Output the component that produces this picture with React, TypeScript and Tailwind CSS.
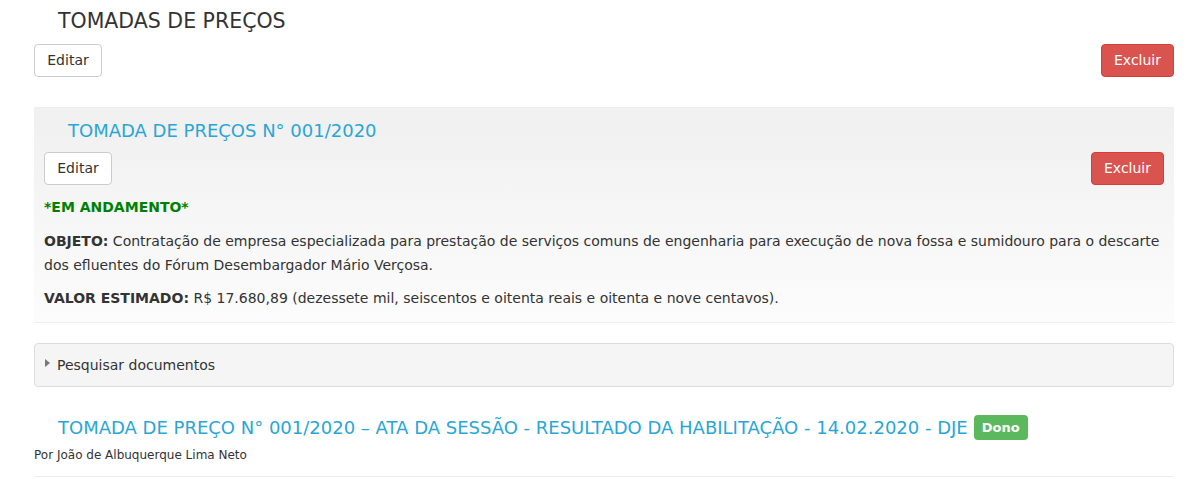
import React from "react";

const font = { fontFamily: '"DejaVu Sans", "Open Sans", sans-serif' };

const App: React.FC = () => {
  return (
    <div className="min-h-screen bg-white text-[#333] text-[14px]" style={font}>
      <div className="mx-[34px] w-[1140px]">
        <h1 className="pl-6 pt-[7px] text-[20.5px] leading-[28px] text-[#333]">TOMADAS DE PREÇOS</h1>
        <div className="mt-[9px] flex justify-between">
          <button className="h-[33px] w-[68px] rounded border border-[#ccc] bg-white text-[14px] text-[#333]">Editar</button>
          <button className="h-[33px] w-[73px] rounded border border-[#d43f3a] bg-[#d9534f] text-[14px] text-white">Excluir</button>
        </div>

        <div className="mt-[30px] border-t border-[#eee] border-b bg-gradient-to-b from-[#f0f0f0] to-[#fcfcfc] px-[10px] pb-[12px]">
          <h2 className="pl-6 pt-[11px] text-[18px] leading-[24px] text-[#2aa6d6]">TOMADA DE PREÇOS N° 001/2020</h2>
          <div className="mt-[9px] flex justify-between">
            <button className="h-[33px] w-[68px] rounded border border-[#ccc] bg-white text-[14px] text-[#333]">Editar</button>
            <button className="h-[33px] w-[73px] rounded border border-[#d43f3a] bg-[#d9534f] text-[14px] text-white">Excluir</button>
          </div>
          <p className="mt-[12px] font-bold text-[#008000] leading-[20px]">*EM ANDAMENTO*</p>
          <p className="mt-[12px] leading-[24px]">
            <b>OBJETO:</b> Contratação de empresa especializada para prestação de serviços comuns de engenharia para execução de nova fossa e sumidouro para o descarte dos efluentes do Fórum Desembargador Mário Verçosa.
          </p>
          <p className="mt-[9px] leading-[24px]">
            <b>VALOR ESTIMADO:</b> R$ 17.680,89 (dezessete mil, seiscentos e oitenta reais e oitenta e nove centavos).
          </p>
        </div>

        <div className="mt-[20px] flex h-[44px] items-center gap-[6px] rounded border border-[#ddd] bg-[#f5f5f5] px-[10px]">
          <svg width="6" height="8" viewBox="0 0 6 8" className="mb-[4px]"><path d="M0 0 L5 4 L0 8 Z" fill="#777" /></svg>
          <span className="text-[14px] text-[#333]">Pesquisar documentos</span>
        </div>

        <div className="mt-[28px] flex items-center pl-6">
          <span className="text-[18px] leading-[24px] text-[#2aa6d6]">TOMADA DE PREÇO N° 001/2020 – ATA DA SESSÃO - RESULTADO DA HABILITAÇÃO - 14.02.2020 - DJE</span>
          <span className="ml-[6px] rounded bg-[#5cb85c] px-[8px] py-[3px] text-[13px] font-bold leading-[19px] text-white">Dono</span>
        </div>
        <p className="mt-[6px] text-[12px] text-[#333]">Por João de Albuquerque Lima Neto</p>
        <div className="mt-[12px] border-b border-[#eee]" />
      </div>
    </div>
  );
};

export default App;
